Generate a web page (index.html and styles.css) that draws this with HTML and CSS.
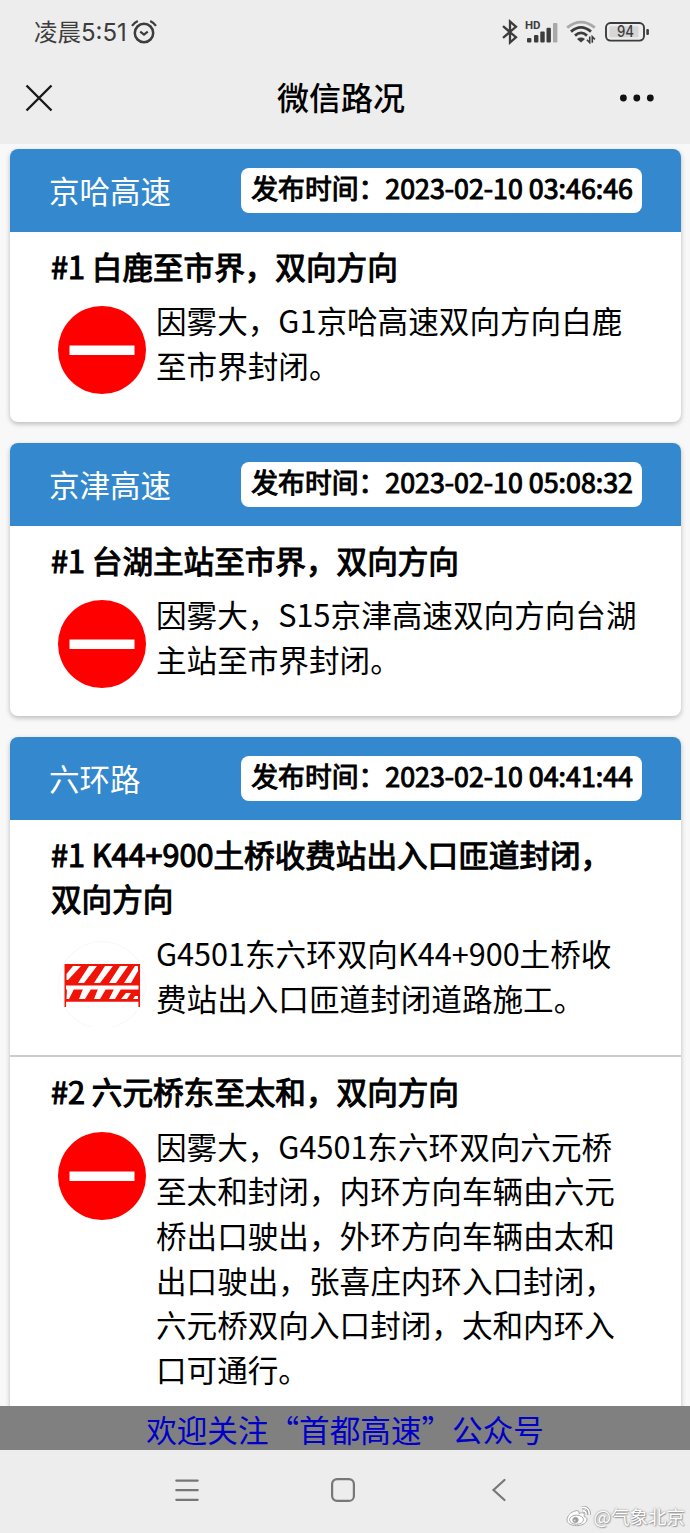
FILE: index.html
```html
<!DOCTYPE html>
<html lang="zh-CN">
<head>
    <meta charset="UTF-8">
    <meta name="viewport" content="width=device-width, initial-scale=1.0">
    <title>微信路况</title>
    <link rel="stylesheet" href="styles.css">
</head>
<body>
    <!-- shared icons -->
    <svg class="symbols">
        <symbol id="closed" viewBox="0 0 88 88">
            <circle cx="44" cy="44" r="44" fill="#fe0000"/>
            <rect x="11.5" y="39.5" width="65" height="9.5" fill="#fff"/>
        </symbol>
    </svg>

    <div class="status-bar">
        <span class="time">凌晨<span class="digits">5:51</span></span>
        <svg class="alarm" width="26" height="24" viewBox="0 0 26 24" fill="none" stroke="#3c3c3c">
            <circle cx="13" cy="13" r="9.2" stroke-width="2.5"/>
            <path d="M9.2 11.6l3.8 3 3.8-3" stroke-width="2.2"/>
            <path d="M1 5.8Q3 2.8 6.8 1M25 5.8Q23 2.8 19.2 1" stroke-width="2.2"/>
        </svg>
        <div class="status-icons">
            <svg width="16" height="26" viewBox="0 0 16 26" fill="none" stroke="#3c3c3c" stroke-width="2.3">
                <path d="M1 7.2l13 11L8 23.5V2.5l6 5.3-13 11"/>
            </svg>
            <svg class="signal" width="33" height="26" viewBox="0 0 33 26">
                <text x="0" y="10" textLength="15.5" lengthAdjust="spacingAndGlyphs">HD</text>
                <g fill="#3c3c3c">
                    <rect x="2" y="19" width="4.4" height="4.5" rx="1"/>
                    <rect x="9" y="16" width="4.4" height="7.5" rx="1"/>
                    <rect x="15.3" y="12.5" width="4.4" height="11" rx="1"/>
                    <rect x="21.5" y="8.7" width="4.4" height="14.8" rx="1"/>
                </g>
                <rect x="28" y="4" width="4.4" height="19.5" rx="1" fill="#a8a8a8"/>
            </svg>
            <svg class="wifi" width="30" height="24" viewBox="0 0 30 24" fill="none" stroke="#3c3c3c" stroke-width="2.8">
                <path d="M1.2 7.6Q15-3.4 28.8 7.6" stroke="#a8a8a8"/>
                <path d="M5 11.6Q15 3.2 25 11.6M9 15.6Q15 10.2 21 15.6"/>
                <path d="M11 18.9Q15 16 19 18.9L15 22.5z" fill="#3c3c3c" stroke="none"/>
                <path d="M23.7 16.4v6.2l-2.8-2.8M26.3 22.8v-6l2.6 2.6" stroke-width="1.6"/>
            </svg>
            <svg class="battery" width="45" height="20" viewBox="0 0 45 20">
                <rect x="1" y="1" width="38" height="17.6" rx="4.5" fill="none" stroke="#3c3c3c" stroke-width="1.9"/>
                <rect x="4.5" y="4.3" width="29" height="11" rx="1" fill="#d6d6d6"/>
                <rect x="41.3" y="7" width="2.6" height="6" rx="1" fill="#3c3c3c"/>
                <text x="12" y="15.3" textLength="17" lengthAdjust="spacingAndGlyphs">94</text>
            </svg>
        </div>
    </div>

    <div class="nav-bar">
        <svg width="28" height="28" viewBox="0 0 28 28" stroke="#191919" stroke-width="2.4">
            <path d="M1.5 1.5l25 25M26.5 1.5l-25 25"/>
        </svg>
        <h1>微信路况</h1>
        <svg width="36" height="8" viewBox="0 0 36 8" fill="#111">
            <circle cx="4.4" cy="4" r="3.4"/>
            <circle cx="17.8" cy="4" r="3.4"/>
            <circle cx="31.3" cy="4" r="3.4"/>
        </svg>
    </div>

    <div class="content">
        <div class="card">
            <div class="card-header">
                <span class="road">京哈高速</span>
                <span class="publish">发布时间：2023-02-10 03:46:46</span>
            </div>
            <div class="event">
                <div class="event-title">#1 白鹿至市界，双向方向</div>
                <div class="event-info">
                    <svg class="sign"><use href="#closed"/></svg>
                    <p>因雾大，G1京哈高速双向方向白鹿至市界封闭。</p>
                </div>
            </div>
        </div>

        <div class="card">
            <div class="card-header">
                <span class="road">京津高速</span>
                <span class="publish">发布时间：2023-02-10 05:08:32</span>
            </div>
            <div class="event">
                <div class="event-title">#1 台湖主站至市界，双向方向</div>
                <div class="event-info">
                    <svg class="sign"><use href="#closed"/></svg>
                    <p>因雾大，S15京津高速双向方向台湖主站至市界封闭。</p>
                </div>
            </div>
        </div>

        <div class="card">
            <div class="card-header">
                <span class="road">六环路</span>
                <span class="publish">发布时间：2023-02-10 04:41:44</span>
            </div>
            <div class="event">
                <div class="event-title">#1 K44+900土桥收费站出入口匝道封闭，双向方向</div>
                <div class="event-info">
                    <svg class="sign" viewBox="0 -2 88 88">
                        <circle cx="44" cy="44" r="43.5" fill="none" stroke="#fdf5f5"/>
                        <path d="M6.5 23h75.5v43h-1.6v-5.2H8.1V66H6.5z" fill="#f01408"/>
                        <g fill="#fff">
                            <path d="M8 44.5h72.5v4H8z"/>
                            <path d="M15 25h8L10 39H8.5v-6zM31 25h8L26 42h-6zM47 25h8L42 42h-6zM62 25h8L58 42h-7zM77 25h3v5l-7 12h-7z"/>
                            <path d="M9 48h7l-5 10H8.5zM25 48h8l-6 10h-6zM40 48h8l-6 10h-6zM56 48h7l-6 10h-6zM68 52h5l-4 6h-6zM77 55h3v3h-5z"/>
                        </g>
                    </svg>
                    <p>G4501东六环双向K44+900土桥收费站出入口匝道封闭道路施工。</p>
                </div>
            </div>
            <div class="event">
                <div class="event-title">#2 六元桥东至太和，双向方向</div>
                <div class="event-info">
                    <svg class="sign"><use href="#closed"/></svg>
                    <p>因雾大，G4501东六环双向六元桥至太和封闭，内环方向车辆由六元桥出口驶出，外环方向车辆由太和出口驶出，张喜庄内环入口封闭，六元桥双向入口封闭，太和内环入口可通行。</p>
                </div>
            </div>
        </div>
    </div>

    <div class="follow"><a>欢迎关注“首都高速”公众号</a></div>

    <div class="system-nav">
        <svg width="24" height="24" viewBox="0 0 24 24" fill="none" stroke="#777" stroke-width="2.2" stroke-linecap="round">
            <path d="M1.3 2.6h21.4M1.3 12.2h21.4M1.3 21.8h21.4"/>
        </svg>
        <svg width="24" height="24" viewBox="0 0 24 24" fill="none" stroke="#777" stroke-width="2.2">
            <rect x="1.1" y="1.1" width="21.8" height="21.8" rx="5"/>
        </svg>
        <svg width="24" height="24" viewBox="0 0 24 24" fill="none" stroke="#777" stroke-width="2.2" stroke-linecap="round">
            <path d="M17.5 2L6.500 12l11 10"/>
        </svg>
        <div class="watermark">
            <svg width="25" height="21" viewBox="0 0 25 21" fill="none" stroke="#aaa" stroke-width="1">
                <path d="M9 5C5 6 1 10 1 14c0 7 18 8 20 0 .5-2-1-3-3-3.5C19 7 17 6 13 7.5 13.5 5 12 4 9 5z" fill="#fff"/>
                <ellipse cx="10.5" cy="13.7" rx="7" ry="4.6" fill="#fff"/>
                <circle cx="9.5" cy="14" r="2.7" fill="#999"/>
                <circle cx="8.8" cy="14.5" r="1" fill="#fff"/>
                <path d="M16 1.5c5-1 8 3 7 7.5M16.5 5c2.5-.5 4 1 3.5 3.5" stroke="#999" stroke-width="3"/>
                <path d="M16 1.5c5-1 8 3 7 7.5M16.5 5c2.5-.5 4 1 3.5 3.5" stroke="#fff" stroke-width="1.6"/>
            </svg>
            <span>@气象北京</span>
        </div>
    </div>
</body>
</html>
```

FILE: styles.css
```css
* {
    box-sizing: border-box;
}

body {
    display: flex;
    flex-direction: column;
    height: 1533px;
    margin: 0;
    overflow: hidden;
    background-color: #f8f8f8;
    font-family: "Noto Sans CJK SC", sans-serif;
    color: #000;
}

svg {
    display: block;
    flex-shrink: 0;
}

.symbols {
    position: absolute;
    width: 0;
    height: 0;
}

.status-bar {
    display: flex;
    flex-shrink: 0;
    align-items: center;
    height: 64px;
    padding: 0 40px 0 34px;
    background-color: #ededed;
    color: #3c3c3c;
}

.time {
    width: 93px;
    font-size: 23.5px;
    line-height: 58px;
    white-space: nowrap;
}

.digits {
    font-family: Inter, sans-serif;
    font-size: 24px;
}

.alarm {
    margin-left: 4px;
}

.status-icons {
    display: flex;
    align-items: center;
    margin-left: auto;
}

.signal {
    margin-left: 7px;
}

.signal text {
    font: bold 10px Roboto, sans-serif;
    fill: #3c3c3c;
}

.wifi {
    margin-left: 8px;
}

.battery {
    margin-left: 9px;
}

.battery text {
    font: 500 15.5px Inter, sans-serif;
    fill: #3c3c3c;
}

.nav-bar {
    display: flex;
    flex-shrink: 0;
    align-items: center;
    justify-content: space-between;
    height: 80px;
    padding: 0 35px 13px 25px;
    background-color: #ededed;
}

.nav-bar h1 {
    margin: 0;
    padding: 0 0 4px 10px;
    font-size: 32px;
    font-weight: 500;
    line-height: 60px;
}

.content {
    flex: 1;
    min-height: 0;
    padding: 5px 9px 0 10px;
    overflow: hidden;
}

.card {
    margin-bottom: 20.8px;
    overflow: hidden;
    border-radius: 8px;
    background-color: #fff;
    box-shadow: 0 2px 5px rgba(0, 0, 0, 0.25);
}

.card-header {
    display: flex;
    align-items: center;
    justify-content: space-between;
    height: 82.5px;
    padding: 0 39px 0 39px;
    background-color: #3488cd;
}

.road {
    color: #fff;
    font-size: 30.5px;
}

.publish {
    height: 45px;
    padding: 0 9px 0 10px;
    border-radius: 8px;
    background-color: #fff;
    font-size: 26.8px;
    line-height: 39px;
    white-space: nowrap;
    -webkit-text-stroke: 1px #000;
}

.event {
    padding: 12px 41px 28px 41px;
}

.event + .event {
    border-top: 2px solid #ccc;
}

.event-title {
    font-size: 30.6px;
    line-height: 44.7px;
    -webkit-text-stroke: 1.1px #000;
}

.event-info {
    display: flex;
    gap: 10px;
    padding: 10px 0 0 7px;
}

.sign {
    width: 88px;
    height: 88px;
    margin-top: 8px;
}

.event-info p {
    margin: 0;
    font-size: 30.6px;
    line-height: 44.7px;
}

.follow {
    flex-shrink: 0;
    height: 44px;
    background-color: #808080;
    color: #0000c8;
    font-size: 30.6px;
    line-height: 46px;
    text-align: center;
}

.system-nav {
    position: relative;
    display: flex;
    flex-shrink: 0;
    justify-content: center;
    gap: 132px;
    height: 83px;
    padding: 28px 4px 0 0;
    background-color: #ededed;
}

.watermark {
    position: absolute;
    right: 5px;
    bottom: 4px;
    display: flex;
    align-items: center;
    gap: 2px;
    color: #fff;
    font-size: 18.5px;
    line-height: 26px;
    text-shadow: 0 0 2px #777, 1px 1px 1px #aaa;
}
```
